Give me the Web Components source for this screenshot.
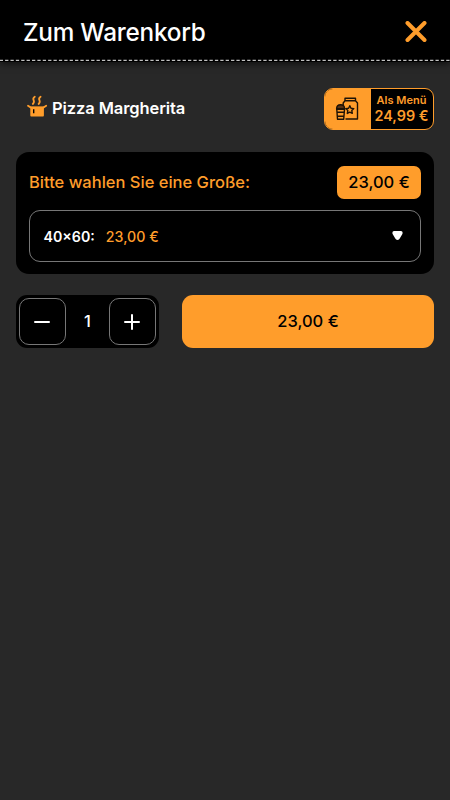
<!DOCTYPE html>
<html lang="de">
<head>
<meta charset="utf-8">
<title>Zum Warenkorb</title>
<style>
  html, body {
    margin: 0;
    min-height: 100%;
  }

  body {
    --accent: #ff9d2b;
    --bg: #282828;
    --line: #777;
    background: var(--bg);
    color: #fff;
    font-family: Inter, Roboto, sans-serif;
    font-size: 16.5px;
  }
</style>
</head>
<body>
<cart-dialog>
  <cart-header slot="header">Zum Warenkorb</cart-header>
  <product-row>Pizza Margherita
    <menu-offer slot="offer" price="24,99 €">Als Menü</menu-offer>
  </product-row>
  <size-picker price="23,00 €" size="40×60:">Bitte wahlen Sie eine Große:</size-picker>
  <order-bar>
    <quantity-stepper value="1"></quantity-stepper>
    <add-button>23,00 €</add-button>
  </order-bar>
</cart-dialog>

<script>
// Attaches an open shadow root and fills it with styles and markup
class BaseElement extends HTMLElement {
  constructor() {
    super();
    this.attachShadow({ mode: "open" });
  }

  connectedCallback() {
    this.shadowRoot.innerHTML = `<style>* { box-sizing: border-box; }${this.styles()}</style>${this.markup()}`;
  }
}

class CartDialog extends BaseElement {
  styles() {
    return `
      :host {
        display: block;
      }

      main {
        padding: 26px 16px 0;
      }
    `;
  }

  markup() {
    return `<slot name="header"></slot><main><slot></slot></main>`;
  }
}

class CartHeader extends BaseElement {
  styles() {
    return `
      :host {
        display: block;
        background: #000;
        box-shadow: 0 2px 7px rgba(0, 0, 0, 0.6);
      }

      .bar {
        display: flex;
        align-items: center;
        justify-content: space-between;
        height: 59px;
        padding: 4px 23px 0 23px;
      }

      h1 {
        margin: 0;
        font-size: 24.3px;
        font-weight: 450;
        letter-spacing: -0.22px;
      }

      svg {
        display: block;
      }

      .stitch {
        width: 100%;
        height: 3px;
      }
    `;
  }

  markup() {
    return `
      <div class="bar">
        <h1><slot></slot></h1>
        <svg width="22" height="22" viewBox="0 0 22 22" fill="none" stroke="var(--accent)" stroke-width="4" stroke-linecap="round">
          <path d="M2.5 2 19.5 19M19.5 2 2.5 19"/>
        </svg>
      </div>
      <svg class="stitch"><path d="M0 1.4H450" stroke="#c0c0c0" stroke-width="1.4" stroke-dasharray="3.3 2.08" stroke-dashoffset="0.3"/></svg>
    `;
  }
}

class ProductRow extends BaseElement {
  styles() {
    return `
      :host {
        display: flex;
        align-items: center;
        height: 42px;
        padding-left: 10px;
      }

      .pot {
        flex: none;
        margin: -7px 4px 0 0;
      }

      .name {
        flex: 1;
        padding-bottom: 2px;
        font-weight: 600;
        letter-spacing: -0.1px;
      }
    `;
  }

  markup() {
    return `
      <svg class="pot" width="22" height="22" viewBox="0 0 22 22">
        <path d="M4.3 11.4H17.9V20.6Q17.9 21.5 17 21.5H5.2Q4.3 21.5 4.3 20.6Z" fill="var(--accent)"/>
        <path d="M2 10.7 4.8 12.6H17.4L20.2 10.7" fill="none" stroke="var(--accent)" stroke-width="1.8" stroke-linecap="round"/>
        <path d="M8.8 1.8C4.5 4.5 10.5 5.6 6.8 9M14.6 1.8C10.3 4.5 16.3 5.6 12.6 9" fill="none" stroke="var(--accent)" stroke-width="1.8" stroke-linecap="round"/>
        <path d="M7.7 14.3V18.2" stroke="#000" stroke-width="1.4"/>
      </svg>
      <span class="name"><slot></slot></span>
      <slot name="offer"></slot>
    `;
  }
}

class MenuOffer extends BaseElement {
  styles() {
    return `
      :host {
        display: flex;
        width: 110px;
        height: 42px;
        border: 1px solid var(--accent);
        border-radius: 9px;
        overflow: hidden;
        background: #000;
        color: var(--accent);
        box-sizing: border-box;
      }

      .icon {
        display: flex;
        align-items: center;
        justify-content: center;
        width: 46px;
        padding: 0 2px 1px 0;
        background: var(--accent);
      }

      .text {
        flex: 1;
        display: flex;
        flex-direction: column;
        align-items: center;
        justify-content: center;
        padding-right: 1px;
        font-weight: 600;
        white-space: nowrap;
      }

      .label {
        font-size: 11px;
        line-height: 13px;
      }

      .price {
        font-size: 14.4px;
        line-height: 17px;
      }
    `;
  }

  markup() {
    return `
      <div class="icon">
        <svg width="24" height="24" viewBox="0 0 24 24" fill="none" stroke="#1d1206" stroke-width="1.4" stroke-linejoin="round">
          <path d="M10.5 22H22.5V6L20.5 3.8V1.3H10V3.8L8.2 6V8.5M10 3.8H20.5"/>
          <path d="m14.8 8.7 1.2 2.5 2.8.4-2 2 .5 2.8-2.5-1.3-2.5 1.3.5-2.8-2-2 2.8-.4Z"/>
          <path d="M1.6 11.8C1.6 6.3 9.6 6.3 9.6 11.8Z" fill="#5a3212"/>
          <path d="M1 12.2H10.2M1.8 12.5 2.5 22.2H8.7L9.5 12.5M2.2 15.2H9.2M2.5 19.2H8.8"/>
        </svg>
      </div>
      <div class="text">
        <span class="label"><slot></slot></span>
        <span class="price">${this.getAttribute("price")}</span>
      </div>
    `;
  }
}

class SizePicker extends BaseElement {
  styles() {
    return `
      :host {
        display: block;
        margin-top: 22px;
        padding: 14px 13px 12px;
        border-radius: 13px;
        background: #000;
      }

      .head {
        display: flex;
        align-items: center;
        justify-content: space-between;
        color: var(--accent);
        font-weight: 500;
      }

      .title {
        padding-bottom: 1px;
      }

      .total {
        width: 84px;
        height: 33px;
        border-radius: 7px;
        background: var(--accent);
        color: #000;
        line-height: 33px;
        text-align: center;
      }

      .select {
        display: flex;
        align-items: center;
        height: 52px;
        margin-top: 11px;
        padding: 0 17px 0 13.5px;
        border: 1px solid var(--line);
        border-radius: 11px;
        font-size: 14.2px;
      }

      .size {
        font-weight: 600;
      }

      .price {
        flex: 1;
        margin-left: 11px;
        color: var(--accent);
        font-weight: 500;
      }

      .select svg {
        margin-bottom: 2px;
      }
    `;
  }

  markup() {
    const price = this.getAttribute("price");

    return `
      <div class="head">
        <span class="title"><slot></slot></span>
        <span class="total">${price}</span>
      </div>
      <div class="select">
        <span class="size">${this.getAttribute("size")}</span>
        <span class="price">${price}</span>
        <svg width="11" height="11" viewBox="0 0 11 11">
          <path d="M2 1H9Q11.2 1.4 10.4 4L7.4 9Q5.5 11 3.6 9L.6 4Q-.2 1.4 2 1Z" fill="#fff"/>
        </svg>
      </div>
    `;
  }
}

class OrderBar extends BaseElement {
  styles() {
    return `
      :host {
        display: flex;
        justify-content: space-between;
        height: 53px;
        margin-top: 21px;
      }
    `;
  }

  markup() {
    return `<slot></slot>`;
  }
}

class QuantityStepper extends BaseElement {
  styles() {
    return `
      :host {
        display: flex;
        align-items: center;
        justify-content: space-between;
        width: 143px;
        padding: 0 3px;
        border-radius: 11px;
        background: #000;
        box-sizing: border-box;
      }

      button {
        display: flex;
        align-items: center;
        justify-content: center;
        width: 47px;
        height: 47px;
        padding: 0 1px 0 0;
        border: 1px solid var(--line);
        border-radius: 10px;
        background: none;
      }

      .value {
        padding-bottom: 1px;
        font-weight: 500;
      }
    `;
  }

  markup() {
    const icon = d => `<svg width="16" height="16" viewBox="0 0 16 16" stroke="#fff" stroke-width="2" stroke-linecap="round"><path d="${d}"/></svg>`;

    return `
      <button aria-label="Weniger">${icon("M1 8H15")}</button>
      <span class="value">${this.getAttribute("value")}</span>
      <button aria-label="Mehr">${icon("M1 8H15M8 1V15")}</button>
    `;
  }
}

class AddButton extends BaseElement {
  styles() {
    return `
      :host {
        display: flex;
        align-items: center;
        justify-content: center;
        width: 252px;
        padding-bottom: 1px;
        border-radius: 11px;
        background: var(--accent);
        color: #000;
        font-weight: 500;
        box-sizing: border-box;
      }
    `;
  }

  markup() {
    return `<slot></slot>`;
  }
}

customElements.define("cart-dialog", CartDialog);
customElements.define("cart-header", CartHeader);
customElements.define("product-row", ProductRow);
customElements.define("menu-offer", MenuOffer);
customElements.define("size-picker", SizePicker);
customElements.define("order-bar", OrderBar);
customElements.define("quantity-stepper", QuantityStepper);
customElements.define("add-button", AddButton);
</script>
</body>
</html>
